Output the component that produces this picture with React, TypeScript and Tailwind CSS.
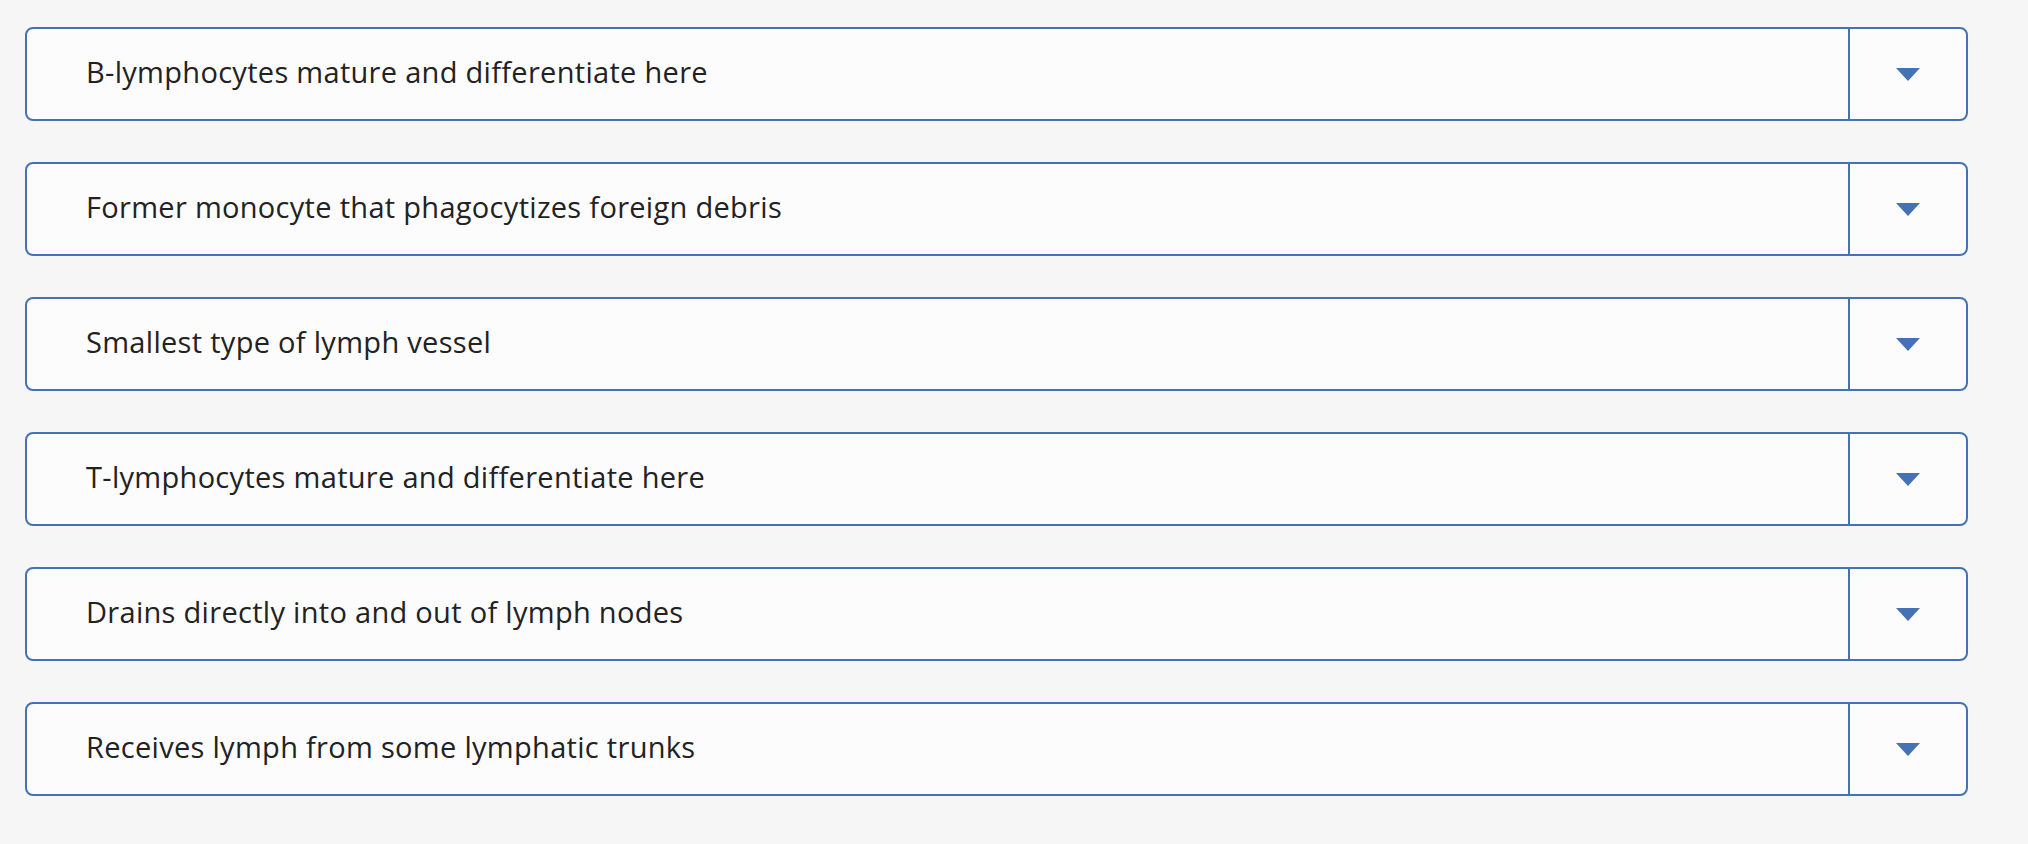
import React from 'react';

const items = [
  'B-lymphocytes mature and differentiate here',
  'Former monocyte that phagocytizes foreign debris',
  'Smallest type of lymph vessel',
  'T-lymphocytes mature and differentiate here',
  'Drains directly into and out of lymph nodes',
  'Receives lymph from some lymphatic trunks',
];

function Caret() {
  return (
    <svg width="24" height="13" viewBox="0 0 24 13" className="block">
      <path d="M0 0 H24 L12 13 Z" fill="#4572b5" />
    </svg>
  );
}

export default function App() {
  return (
    <div
      className="min-h-screen w-full bg-[#f6f6f6] pl-[25px] pr-[60px] pt-[27px]"
      style={{ fontFamily: '"Open Sans", "Noto Sans", sans-serif' }}
    >
      <div className="flex flex-col gap-[41px]">
        {items.map((text) => (
          <div
            key={text}
            className="flex h-[94px] w-[1943px] rounded-[8px] border-2 border-[#4572b5] bg-[#fcfcfc]"
          >
            <div className="flex flex-1 items-center pb-[4px] pl-[59px] text-[29px] tracking-[0.3px] text-[#222222]">
              {text}
            </div>
            <div className="flex w-[118px] items-center justify-center border-l-2 border-[#4572b5]">
              <Caret />
            </div>
          </div>
        ))}
      </div>
    </div>
  );
}
